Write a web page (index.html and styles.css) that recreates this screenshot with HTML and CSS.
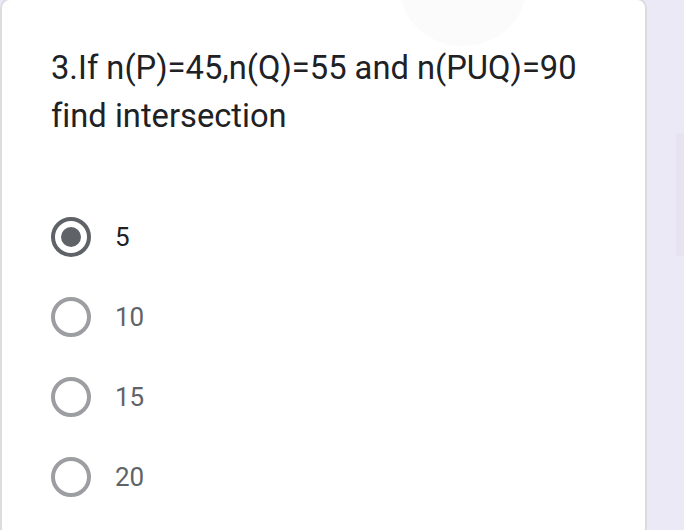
FILE: index.html
```html
<!DOCTYPE html>
<html lang="en">
<head>
<meta charset="utf-8">
<title>Question</title>
<link rel="stylesheet" href="styles.css">
</head>
<body>
<div class="page">
  <div class="card">
    <div class="ripple"></div>
    <div class="question">3.If n(P)=45,n(Q)=55 and n(PUQ)=90 find intersection</div>
    <div class="options">
      <div class="option checked"><span class="radio"><span class="dot"></span></span><span class="label">5</span></div>
      <div class="option"><span class="radio"></span><span class="label">10</span></div>
      <div class="option"><span class="radio"></span><span class="label">15</span></div>
      <div class="option"><span class="radio"></span><span class="label">20</span></div>
    </div>
  </div>
  <div class="side-panel"></div>
</div>
</body>
</html>
```
FILE: styles.css
```css
html, body {
  margin: 0;
  padding: 0;
  background: #ece9f6;
}
.page {
  display: flex;
  align-items: flex-start;
  gap: 29px;
  height: 530px;
  overflow: hidden;
  font-family: Roboto, "Noto Sans", sans-serif;
  font-variant-ligatures: none;
}
.card {
  position: relative;
  flex-shrink: 0;
  box-sizing: border-box;
  width: 647px;
  height: 540px;
  margin-top: -2px;
  background: #ffffff;
  border: 2px solid #dcdce0;
  border-radius: 10px;
  padding: 44px 0 0 49px;
  overflow: hidden;
}
.ripple {
  position: absolute;
  left: 398px;
  top: -70px;
  width: 126px;
  height: 116px;
  border-radius: 50%;
  background: #fbfbfb;
}
.question {
  position: relative;
  font-size: 32.7px;
  line-height: 48px;
  color: #202124;
  width: 570px;
}
.options {
  display: flex;
  flex-direction: column;
  margin-top: 57px;
}
.option {
  display: flex;
  align-items: center;
  height: 80px;
  gap: 24px;
}
.radio {
  box-sizing: border-box;
  width: 40px;
  height: 40px;
  border-radius: 50%;
  border: 4px solid #9c9ea2;
  display: flex;
  align-items: center;
  justify-content: center;
}
.checked .radio {
  border-color: #5f6368;
}
.dot {
  width: 20px;
  height: 20px;
  border-radius: 50%;
  background: #5f6368;
}
.label {
  font-size: 26px;
  color: #5f6368;
  line-height: 30px;
}
.checked .label {
  color: #202124;
}
.side-panel {
  flex-shrink: 0;
  width: 40px;
  height: 123px;
  margin-top: 133px;
  background: #e7e3f1;
}
```
